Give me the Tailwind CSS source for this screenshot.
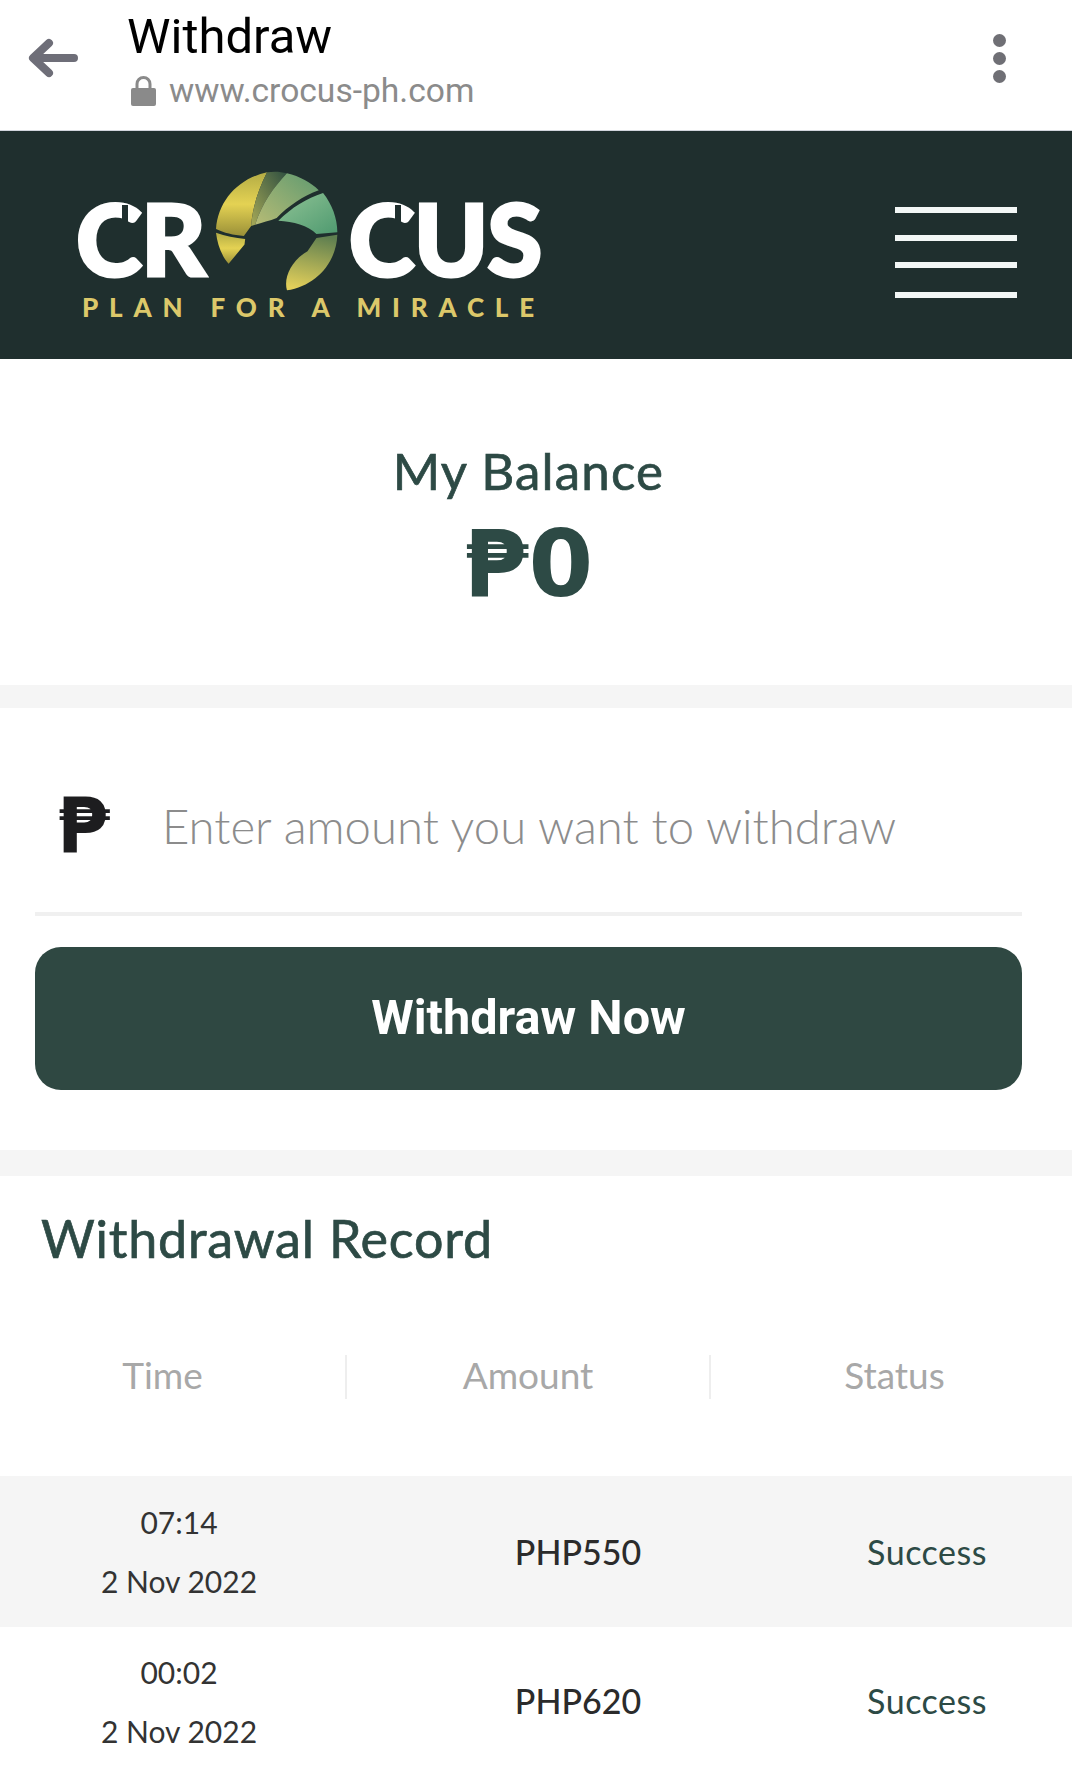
<!DOCTYPE html>
<html>
<head>
    <meta charset="utf-8">
    <title>Withdraw</title>
    <script src="https://cdn.jsdelivr.net/npm/@tailwindcss/browser@4"></script>
</head>
<body class="bg-white font-['Lato',sans-serif]">
    <div class="w-[1072px] h-[1790px] overflow-hidden">
        <!-- browser bar -->
        <div class="h-[131px] flex items-center pl-[28px] pr-[66px] border-b border-gray-300">
            <svg class="w-[50px] h-[40px] mt-[-14px]" viewBox="0 0 50 40" fill="none" stroke="#6e6e78" stroke-width="8" stroke-linecap="round" stroke-linejoin="round">
                <path d="M46 20H6M21 5L5 20l16 15"/>
            </svg>
            <div class="ml-[49px] font-['Roboto',sans-serif]">
                <div class="text-[49px] leading-[48px] text-black mt-[-8px]">Withdraw</div>
                <div class="flex items-center mt-[12px] ml-[3px]">
                    <svg class="w-[27px] h-[32px]" viewBox="0 0 27 32">
                        <path d="M7 14V9a6.500 6.500 0 0 1 13 0v5" fill="none" stroke="#8a8a8a" stroke-width="3"/>
                        <rect x="1" y="13" width="25" height="18" rx="2" fill="#8a8a8a"/>
                    </svg>
                    <span class="ml-[12px] text-[33.600px] leading-[36px] text-[#8b8b8b]">www.crocus-ph.com</span>
                </div>
            </div>
            <div class="ml-auto flex flex-col gap-[5px] mt-[-14px]">
                <div class="w-[13px] h-[13px] rounded-full bg-[#6f6f75]"></div>
                <div class="w-[13px] h-[13px] rounded-full bg-[#6f6f75]"></div>
                <div class="w-[13px] h-[13px] rounded-full bg-[#6f6f75]"></div>
            </div>
        </div>

        <!-- site header -->
        <div class="h-[228px] bg-[#1f2f2e] flex items-center pl-[76px] pr-[55px]">
            <div class="relative w-[464px] h-[170px] shrink-0">
                <div class="flex items-start">
                    <span class="relative text-[100px] leading-[96px] font-black text-white tracking-[-1px] mt-[29px] [-webkit-text-stroke:3px_white]">CR
                        <span class="absolute left-[46px] top-[16px] w-[6px] h-[26px] bg-[#1f2f2e]"></span>
                    </span>
                    <svg class="w-[124px] h-[120px] ml-[10px] mt-[11px] shrink-0" viewBox="20 30 372 362">
                        <defs>
                            <linearGradient id="leafA" x1="0" y1="0" x2="0" y2="1">
                                <stop offset="0" stop-color="#b3ac45"/>
                                <stop offset="0.5" stop-color="#e4d253"/>
                                <stop offset="1" stop-color="#9a9038"/>
                            </linearGradient>
                            <linearGradient id="leafB" x1="1" y1="0" x2="0" y2="1">
                                <stop offset="0" stop-color="#2f4f40"/>
                                <stop offset="1" stop-color="#a6a957"/>
                            </linearGradient>
                            <linearGradient id="leafC" x1="1" y1="0" x2="0" y2="1">
                                <stop offset="0" stop-color="#5f9a70"/>
                                <stop offset="1" stop-color="#b6bb75"/>
                            </linearGradient>
                            <linearGradient id="leafD" x1="0" y1="0" x2="1" y2="1">
                                <stop offset="0" stop-color="#8fc395"/>
                                <stop offset="1" stop-color="#4f9a70"/>
                            </linearGradient>
                            <linearGradient id="leafE" x1="0.6" y1="0" x2="0.4" y2="1">
                                <stop offset="0" stop-color="#5f7f50"/>
                                <stop offset="1" stop-color="#e2cf5a"/>
                            </linearGradient>
                        </defs>
                        <path d="M22 205C28 120 90 52 176 34C150 85 132 140 128 196L106 226C75 224 45 216 22 205Z" fill="url(#leafA)"/>
                        <path d="M22 216C50 226 80 232 110 235L108 252L60 310C38 285 26 250 22 216Z" fill="url(#leafA)"/>
                        <path d="M176 34C195 31 215 31 236 37C195 80 160 130 140 192L128 196C132 140 150 85 176 34Z" fill="url(#leafB)"/>
                        <path d="M236 37C275 46 308 65 332 88C285 105 240 135 205 172C185 180 160 186 140 192C160 130 195 80 236 37Z" fill="url(#leafC)"/>
                        <path d="M345 96C372 130 388 172 388 215L325 220C300 195 255 182 210 180C250 140 295 112 345 96Z" fill="url(#leafD)"/>
                        <path d="M388 222C385 310 320 378 236 390C225 350 250 300 298 272L325 232Z" fill="url(#leafE)"/>
                    </svg>
                    <span class="relative text-[100px] leading-[96px] font-black text-white tracking-[-1px] mt-[29px] ml-[10px] [-webkit-text-stroke:3px_white]">CUS
                        <span class="absolute left-[46px] top-[16px] w-[6px] h-[26px] bg-[#1f2f2e]"></span>
                    </span>
                </div>
                <div class="absolute left-[6px] top-[132px] text-[26px] leading-[30px] font-black text-[#dcc86a] tracking-[10.800px] whitespace-nowrap">PLAN FOR A MIRACLE</div>
            </div>
            <div class="ml-auto flex flex-col w-[122px] mt-[14px]">
                <div class="h-[6px] bg-[#f2f7f6]"></div>
                <div class="h-[6px] bg-[#f2f7f6] mt-[22px]"></div>
                <div class="h-[6px] bg-[#f2f7f6] mt-[21px]"></div>
                <div class="h-[6px] bg-[#f2f7f6] mt-[24px]"></div>
            </div>
        </div>

        <!-- balance -->
        <div class="h-[326px] flex flex-col items-center pr-[15px] pt-[80px] text-[#2d4a45]">
            <div class="text-[51px] leading-[64px] tracking-[1.200px] [-webkit-text-stroke:0.7px_#2d4a45]">My Balance</div>
            <div class="text-[93px] leading-[90px] font-bold font-['DejaVu_Sans',sans-serif] mt-[16px]">₱0</div>
        </div>
        <div class="h-[23px] bg-[#f5f5f5]"></div>

        <!-- withdraw form -->
        <div class="h-[442px] px-[35px] pr-[50px]">
            <div class="h-[208px] border-b-[4px] border-[#f0f0f0] flex items-center pl-[22px] pt-[32px]">
                <span class="w-[105px] text-[76px] leading-[70px] font-bold text-[#1d1d1f] font-['DejaVu_Sans',sans-serif]">₱</span>
                <span class="text-[47.300px] leading-[56px] font-light text-[#8c8c8c]">Enter amount you want to withdraw</span>
            </div>
            <button class="mt-[31px] w-full h-[143px] rounded-[26px] bg-[#2f4842] text-white text-[48.600px] font-bold font-['Roboto',sans-serif]">Withdraw Now</button>
        </div>
        <div class="h-[26px] bg-[#f5f5f5]"></div>

        <!-- record -->
        <div class="h-[300px] pt-[30px]">
            <div class="pl-[41px] text-[52px] leading-[64px] tracking-[0.800px] text-[#2d4a45] [-webkit-text-stroke:0.7px_#2d4a45]">Withdrawal Record</div>
            <div class="grid grid-cols-[347px_364px_361px] mt-[85px] text-[37px] leading-[44px] text-[#a8a8a8]">
                <div class="pr-[20px] text-center border-r-2 border-[#eeeeee]"><span class="relative top-[-2px]">Time</span></div>
                <div class="text-center border-r-2 border-[#eeeeee]"><span class="relative top-[-2px]">Amount</span></div>
                <div class="pl-[6px] text-center"><span class="relative top-[-2px]">Status</span></div>
            </div>
        </div>

        <div class="grid grid-cols-[358px_440px_258px] items-center h-[151px] bg-[#f5f5f5]">
            <div class="text-center text-[30px] leading-[59px] text-[#333333]">07:14<br>2 Nov 2022</div>
            <div class="text-center text-[34px] font-medium text-[#2b2b2b]">PHP550</div>
            <div class="text-center text-[34px] tracking-[0.500px] text-[#2d4a45]">Success</div>
        </div>
        <div class="grid grid-cols-[358px_440px_258px] items-center h-[150px]">
            <div class="text-center text-[30px] leading-[59px] text-[#333333]">00:02<br>2 Nov 2022</div>
            <div class="text-center text-[34px] font-medium text-[#2b2b2b] pb-[4px]">PHP620</div>
            <div class="text-center text-[34px] tracking-[0.500px] text-[#2d4a45] pb-[4px]">Success</div>
        </div>
    </div>
</body>
</html>
